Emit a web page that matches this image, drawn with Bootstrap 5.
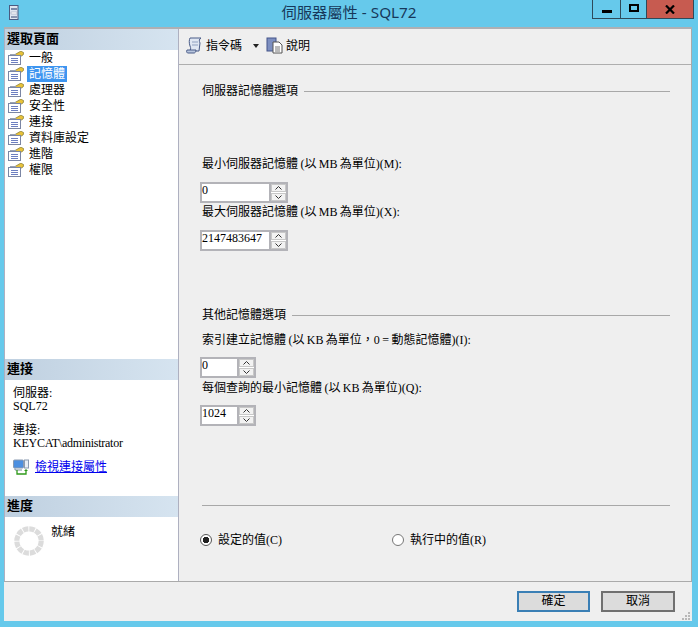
<!DOCTYPE html>
<html lang="zh-Hant"><head><meta charset="utf-8">
<title>伺服器屬性 - SQL72</title>
<link rel="stylesheet" href="https://cdn.jsdelivr.net/npm/bootstrap@5.3.0/dist/css/bootstrap.min.css">
<style>
html,body{margin:0;height:627px;overflow:hidden}
body{background:#66c9eb;font:12px/16px "Liberation Serif","Noto Sans CJK TC",serif;color:#000}
.win{width:698px;height:627px}
.tbar{display:grid;grid-template-columns:1fr auto 1fr;height:27px;flex:none}
.ttl{font:15.3px/25px "Noto Sans","Noto Sans CJK TC",sans-serif;color:#17385a}
.srv{margin:5px 0 0 9px}
.wbtns{height:19px;margin-right:4px;border:1px solid #2e4a5a;border-top:0}
.wb{display:flex;align-items:center;justify-content:center;height:18px;border-right:1px solid #2e4a5a}
.wb-min{width:28px}.wb-max{width:26px}.wb-x{width:46px;background:#c75b50;border-right:0}
.gm{width:10px;height:3px;background:#000;margin-top:5px}
.gs{width:10px;height:8px;border:2px solid #000;margin-top:-3px}
.client{margin:0 6px 6px 4px;height:594px;background:#efefef;border-top:2px solid #aeb0b4;flex:none}
.mainrow{height:553px;border-bottom:1px solid #aaa}
.side{width:175px;flex:none;background:#fff;border-left:1px solid #aeb0c0;border-right:1px solid #aeb0c0}
.phead{height:21px;line-height:20px;padding-left:2px;font-weight:700;font-size:13px;background:linear-gradient(90deg,#bfd0e0,#d6e4f0)}
.pages{height:309px;margin:0}
.pg{height:16px;display:flex;align-items:center;gap:3px;padding-left:3px}
.pg span{padding:0 2px;line-height:16px}
.pg .sel{background:#3d95f0;color:#fff}
.conn{height:116px;padding:7px 0 0 8px;line-height:13px}
.conn p{margin:0 0 11px}
.conn p:last-of-type{margin-bottom:9px}
.acct{letter-spacing:-.25px}
.vlink{display:flex;gap:6px;align-items:center;height:16px}
.vlink a{color:#0000ee}
.prog{height:64px;padding:7px 0 0 9px;gap:7px}
.spin{margin-top:2px}
.rpane{flex:1;min-width:0;border-right:1px solid #aaa}
.tools{height:36px;border-bottom:1px solid #aeaeae;padding:0 0 2px 7px}
.tools .ti{display:flex;align-items:center;gap:3px}
.caret{width:0;height:0;border:3.500px solid transparent;border-top:4px solid #222;border-bottom:0;margin:0 7px 0 11px}
.form-pane{padding:0 21px 0 23px}
.sect{height:16px;margin-top:18px;gap:6px}
.sect2{margin-top:56px}
.sect hr{flex:1;margin:0;border:0;border-top:1px solid #a8a8a8;opacity:1}
.lbl{height:16px;white-space:nowrap;display:block;margin:0;word-spacing:-.6px}
.lbl1{margin-top:57px}
.lbl2{margin-top:1px}
.lbl3{margin-top:9px}
.lbl4{margin-top:2px}
.spinrow{height:21px;display:flex;margin:10px 0 0 -2px}
.sr9{margin-top:9px}
.spinrow input{height:21px;border:2px solid #b3b3b8;border-radius:0;padding:0 0 4px 0;font:12px/15px "Liberation Serif",serif;color:#000;box-shadow:none;background:#fff}
.w71{width:71px}.w39{width:39px}
.arrows{width:17px;height:21px;border:2px solid #b3b3b8;border-left:0;display:flex;flex-direction:column;gap:1px;padding:0;background:#fff}
.arrows i{flex:1;background:#f2f2f2;border:1px solid #c8c8c8;display:flex;align-items:center;justify-content:center}
.rule{border:0;border-top:1px solid #a8a8a8;opacity:1;margin:79px 0 0}
.radios{margin:26px 0 0 -2px;height:16px}
.rad{display:flex;align-items:center;gap:6px;margin:0}
.rad1{width:192px}
.rad input{margin:0;width:12px;height:12px;float:none;flex:none;border:1px solid #777;background-color:#fff}
.rad input:checked{background-color:#fff;border-color:#555;background-image:radial-gradient(circle,#222 0 3px,transparent 3.2px)}
.foot{height:39px;padding:9px 0 0;position:relative}
.fbtn{height:21px;width:74px;padding:0;border-radius:0;background:#dcdcdc;border:2px solid #707070;font:12px/17px "Liberation Serif","Noto Sans CJK TC",serif;color:#000}
.fbtn.def{border-color:#3a7fb5;width:73px}
.fbtn2{margin:0 17px 0 3px}
.grip{position:absolute;right:2px;bottom:1px}
</style></head><body>
<div class="win d-flex flex-column">
 <div class="tbar">
  <div><svg class="srv" width="10" height="15" viewBox="0 0 10 15" aria-hidden="true"><rect x=".5" y=".5" width="8.5" height="14" fill="#dfe6f0" stroke="#4a5a80"/><rect x="2" y="3" width="6" height="2" fill="#7a88a8"/><rect x="2" y="7" width="6" height="2" fill="#fff" stroke="#8a96b0" stroke-width=".5"/><rect x="2" y="11" width="6" height="2" fill="#8a96b0"/></svg></div>
  <div class="ttl">伺服器屬性 - SQL72</div>
  <div class="d-flex justify-content-end align-items-start"><div class="wbtns d-flex">
   <div class="wb wb-min"><div class="gm"></div></div><div class="wb wb-max"><div class="gs"></div></div>
   <div class="wb wb-x"><svg width="10" height="9" viewBox="0 0 10 9" aria-hidden="true"><path d="M1 .5 9 8.5M9 .5 1 8.5" stroke="#000" stroke-width="2.2"/></svg></div>
  </div></div>
 </div>
 <div class="client d-flex flex-column">
  <div class="mainrow d-flex">
   <div class="side d-flex flex-column">
    <div class="phead">選取頁面</div>
    <div class="pages">
     <svg width="0" height="0" class="position-absolute" aria-hidden="true"><defs><symbol id="pi" viewBox="0 0 16 14"><path d="M7 3.500 13 0l3 2-1 2-5 3z" fill="#e8c23a" stroke="#7d7434" stroke-width=".7"/><path d="M2 3.500h6" stroke="#9aa2b0"/><rect x=".5" y="4.500" width="12" height="9" fill="#fff" stroke="#7b86a4"/><path d="M3 7.500h7M3 9.500h7M3 11.500h7" stroke="#6d7fc0"/></symbol></defs></svg>
     <div class="pg"><svg width="16" height="14"><use href="#pi"/></svg><span>一般</span></div>
     <div class="pg"><svg width="16" height="14"><use href="#pi"/></svg><span class="sel">記憶體</span></div>
     <div class="pg"><svg width="16" height="14"><use href="#pi"/></svg><span>處理器</span></div>
     <div class="pg"><svg width="16" height="14"><use href="#pi"/></svg><span>安全性</span></div>
     <div class="pg"><svg width="16" height="14"><use href="#pi"/></svg><span>連接</span></div>
     <div class="pg"><svg width="16" height="14"><use href="#pi"/></svg><span>資料庫設定</span></div>
     <div class="pg"><svg width="16" height="14"><use href="#pi"/></svg><span>進階</span></div>
     <div class="pg"><svg width="16" height="14"><use href="#pi"/></svg><span>權限</span></div>
    </div>
    <div class="phead">連接</div>
    <div class="conn">
     <p>伺服器:<br>SQL72</p>
     <p>連接:<br><span class="acct">KEYCAT\administrator</span></p>
     <div class="vlink"><svg width="16" height="16" viewBox="0 0 16 16" aria-hidden="true"><rect x=".5" y="1" width="10" height="8" rx="1" fill="#4c8fe0" stroke="#8a9ab0"/><rect x="11.500" y="1" width="4" height="8" fill="#e8eef6" stroke="#8a9ab0"/><path d="M2 9.500v1.500h7" stroke="#7a8a9a" fill="none"/><path d="M4 11v4h9v-3" stroke="#2f9a1a" stroke-width="1.300" fill="none"/><path d="M11 12l2-2 2 2z" fill="#2f9a1a"/></svg><a href="#">檢視連接屬性</a></div>
    </div>
    <div class="phead">進度</div>
    <div class="prog d-flex">
     <svg class="spin" width="30" height="30" viewBox="0 0 32 32" aria-hidden="true"><circle cx="16" cy="16" r="13" fill="none" stroke="#dcdcdc" stroke-width="5.500" stroke-dasharray="5.800 1"/></svg>
     <div>就緒</div>
    </div>
   </div>
   <div class="rpane d-flex flex-column">
    <div class="tools d-flex align-items-center">
     <div class="ti"><svg width="17" height="17" viewBox="0 0 17 17" aria-hidden="true"><path d="M4 1h11c-2 1-2 3-1 5l-1 8H3c2-1 2-3 1-5C3 6 3 3 4 1z" fill="#dfe6f2" stroke="#4a5c88"/><path d="M1 13h9c0 2-1 3-2 3H2c-1 0-2-1-1-3z" fill="#b8c6de" stroke="#4a5c88"/><path d="M6 5h6M6 8h6" stroke="#8fa0c0"/></svg><span>指令碼</span></div>
     <span class="caret"></span>
     <div class="ti"><svg width="17" height="17" viewBox="0 0 17 17" aria-hidden="true"><rect x="1" y="1" width="9" height="13" fill="#7d8fc0" stroke="#44548a"/><path d="M7 5h6l3 3v8H7z" fill="#fff" stroke="#555"/><path d="M9 10h5M9 12h5M9 14h5" stroke="#777"/></svg><span>說明</span></div>
    </div>
    <div class="form-pane flex-grow-1">
     <div class="sect d-flex align-items-center"><span>伺服器記憶體選項</span><hr></div>
     <label class="lbl lbl1">最小伺服器記憶體 (以 MB 為單位)(M):</label>
     <div class="spinrow"><input class="form-control w71" value="0" aria-label="min"><div class="arrows"><i><svg width="7" height="4"><path d="M.5 3.500 3.500 .5l3 3" fill="none" stroke="#333"/></svg></i><i><svg width="7" height="4"><path d="M.5 .5l3 3 3-3" fill="none" stroke="#333"/></svg></i></div></div>
     <label class="lbl lbl2">最大伺服器記憶體 (以 MB 為單位)(X):</label>
     <div class="spinrow"><input class="form-control w71" value="2147483647" aria-label="max"><div class="arrows"><i><svg width="7" height="4"><path d="M.5 3.500 3.500 .5l3 3" fill="none" stroke="#333"/></svg></i><i><svg width="7" height="4"><path d="M.5 .5l3 3 3-3" fill="none" stroke="#333"/></svg></i></div></div>
     <div class="sect sect2 d-flex align-items-center"><span>其他記憶體選項</span><hr></div>
     <label class="lbl lbl3">索引建立記憶體 (以 KB 為單位，0 = 動態記憶體)(I):</label>
     <div class="spinrow sr9"><input class="form-control w39" value="0" aria-label="index"><div class="arrows"><i><svg width="7" height="4"><path d="M.5 3.500 3.500 .5l3 3" fill="none" stroke="#333"/></svg></i><i><svg width="7" height="4"><path d="M.5 .5l3 3 3-3" fill="none" stroke="#333"/></svg></i></div></div>
     <label class="lbl lbl4">每個查詢的最小記憶體 (以 KB 為單位)(Q):</label>
     <div class="spinrow sr9"><input class="form-control w39" value="1024" aria-label="query"><div class="arrows"><i><svg width="7" height="4"><path d="M.5 3.500 3.500 .5l3 3" fill="none" stroke="#333"/></svg></i><i><svg width="7" height="4"><path d="M.5 .5l3 3 3-3" fill="none" stroke="#333"/></svg></i></div></div>
     <hr class="rule">
     <div class="radios d-flex">
      <label class="rad rad1"><input class="form-check-input" type="radio" name="v" checked>設定的值(C)</label>
      <label class="rad"><input class="form-check-input" type="radio" name="v">執行中的值(R)</label>
     </div>
    </div>
   </div>
  </div>
  <div class="foot d-flex justify-content-end gap-2">
   <button class="btn fbtn def" type="button">確定</button>
   <button class="btn fbtn fbtn2" type="button">取消</button>
   <svg class="grip" width="8" height="8" aria-hidden="true"><path d="M6 0h2v2H6zM3 3h2v2H3zM6 3h2v2H6zM0 6h2v2H0zM3 6h2v2H3zM6 6h2v2H6z" fill="#b8b8b8"/></svg>
  </div>
 </div>
</div>
</body></html>
